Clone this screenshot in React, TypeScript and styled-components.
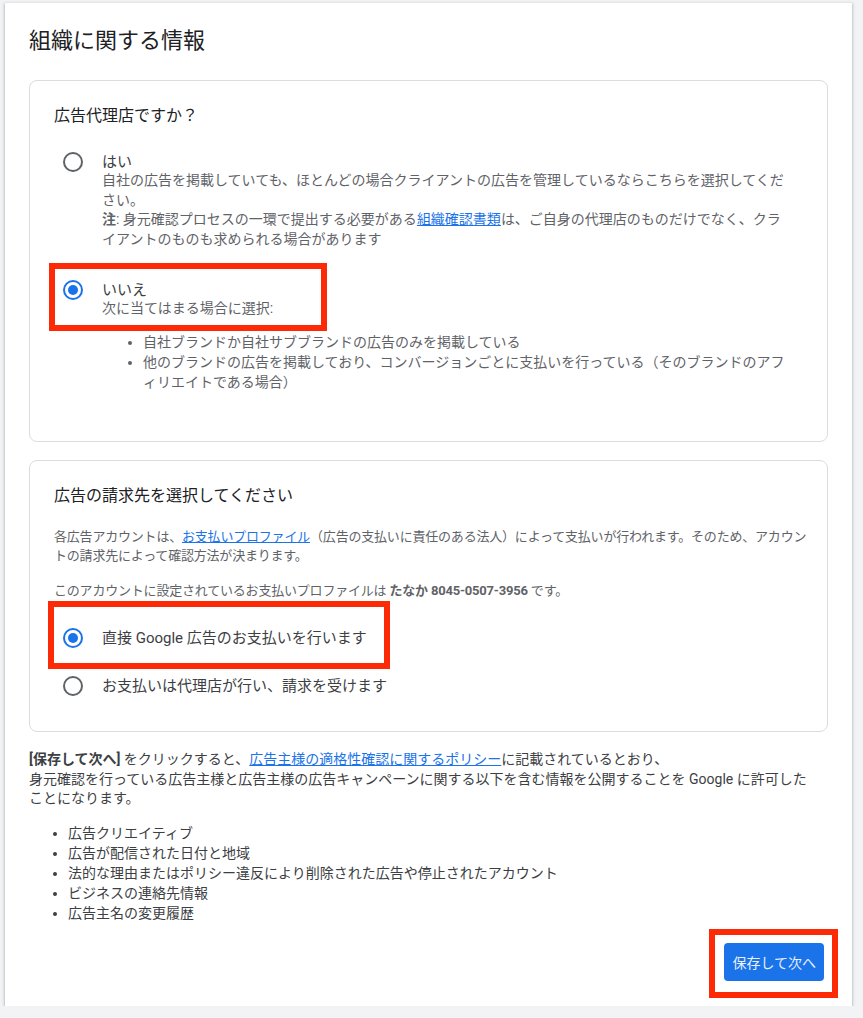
import React from "react";
import styled, { createGlobalStyle } from "styled-components";

const GlobalStyle = createGlobalStyle`
  body {
    margin: 0;
    background: #f1f3f4;
    font-family: Roboto, "Noto Sans CJK JP", "Noto Sans", sans-serif;
    color: #3c4043;
  }
`;

interface Box {
  $left: number;
  $top: number;
  $w: number;
  $h: number;
}

// red annotation frame drawn over the screenshot
const Highlight = styled.span<Box>`
  position: absolute;
  left: ${(p) => p.$left}px;
  top: ${(p) => p.$top}px;
  width: ${(p) => p.$w}px;
  height: ${(p) => p.$h}px;
  box-sizing: border-box;
  border: 6px solid #fd2a08;
  pointer-events: none;
`;

const Page = styled.div`
  width: 847px;
  margin: 3px 0 0 5px;
  box-sizing: border-box;
  padding: 24px 24px 25px;
  background: #fff;
  box-shadow: 0 1px 2px rgba(60, 64, 67, 0.3), 0 1px 3px 1px rgba(60, 64, 67, 0.15);
`;

const Title = styled.h1`
  margin: 0 0 25px;
  font-size: 22px;
  line-height: 28px;
  font-weight: 400;
  color: #202124;
`;

const Section = styled.section<{ $bottom: number }>`
  border: 1px solid #dadce0;
  border-radius: 8px;
  padding: 23px 16px ${(p) => p.$bottom}px 24px;
  & + & {
    margin-top: 18px;
  }
`;

const Heading = styled.h2`
  margin: 0;
  font-size: 16px;
  line-height: 24px;
  font-weight: 400;
  color: #202124;
`;

const Option = styled.div<{ $gap: number; $height?: number }>`
  position: relative;
  display: flex;
  align-items: ${(p) => (p.$height ? "center" : "flex-start")};
  margin-top: ${(p) => p.$gap}px;
  padding-right: 18px;
  ${(p) => (p.$height ? `height: ${p.$height}px;` : "")}
`;

const RadioSlot = styled.div<{ $lh: number }>`
  height: ${(p) => p.$lh}px;
  display: flex;
  align-items: center;
  padding-left: 9px;
  margin-right: 19px;
`;

const Radio = styled.span<{ $checked?: boolean }>`
  width: 20px;
  height: 20px;
  box-sizing: border-box;
  border-radius: 50%;
  border: 2px solid ${(p) => (p.$checked ? "#1a73e8" : "#5f6368")};
  display: flex;
  align-items: center;
  justify-content: center;
  &::after {
    content: "";
    width: 10px;
    height: 10px;
    border-radius: 50%;
    background: ${(p) => (p.$checked ? "#1a73e8" : "transparent")};
  }
`;

const OptionBody = styled.div`
  flex: 1;
`;

const Label = styled.div<{ $lh: number }>`
  font-size: 15px;
  line-height: ${(p) => p.$lh}px;
  color: #3c4043;
`;

const Desc = styled.div`
  font-size: 14px;
  line-height: 19.5px;
  color: #5f6368;
`;

const SubList = styled.ul`
  margin: 13px 0 25px;
  padding-left: 41px;
  font-size: 14px;
  line-height: 20px;
  color: #5f6368;
`;

const Para = styled.p<{ $gap: number }>`
  margin: ${(p) => p.$gap}px 0 0;
  font-size: 13px;
  line-height: 19.5px;
  letter-spacing: -0.2px;
  color: #5f6368;
`;

const Link = styled.a`
  color: #1a73e8;
  text-decoration: underline;
`;

const Strong = styled.b`
  font-weight: 700;
  color: inherit;
`;

const Notice = styled.p`
  margin: 18px 0 0;
  padding-right: 8px;
  font-size: 14px;
  line-height: 19.5px;
  color: #3c4043;
`;

const PublishList = styled.ul`
  margin: 14px 0 0;
  padding-left: 39px;
  font-size: 14px;
  line-height: 20px;
  color: #3c4043;
`;

const Actions = styled.div`
  display: flex;
  justify-content: flex-end;
  margin-top: 20px;
  padding-right: 4px;
`;

const ButtonWrap = styled.div`
  position: relative;
`;

const PrimaryButton = styled.button`
  height: 38px;
  padding: 0 8px;
  min-width: 99px;
  border: none;
  border-radius: 4px;
  background: #1a73e8;
  color: #e8f0fe;
  font-family: inherit;
  font-size: 14px;
  cursor: pointer;
`;

export default function App() {
  return (
    <>
      <GlobalStyle />
      <Page>
        <Title>組織に関する情報</Title>

        <Section $bottom={24}>
          <Heading>広告代理店ですか？</Heading>

          <Option $gap={25}>
            <RadioSlot $lh={18}>
              <Radio />
            </RadioSlot>
            <OptionBody>
              <Label $lh={18}>はい</Label>
              <Desc>
                自社の広告を掲載していても、ほとんどの場合クライアントの広告を管理しているならこちらを選択してください。
              </Desc>
              <Desc>
                <Strong>注</Strong>: 身元確認プロセスの一環で提出する必要がある
                <Link href="#">組織確認書類</Link>
                は、ご自身の代理店のものだけでなく、クライアントのものも求められる場合があります
              </Desc>
            </OptionBody>
          </Option>

          <Option $gap={32}>
            <Highlight $left={-5} $top={-18} $w={278} $h={68} />
            <RadioSlot $lh={18}>
              <Radio $checked />
            </RadioSlot>
            <OptionBody>
              <Label $lh={18}>いいえ</Label>
              <Desc>次に当てはまる場合に選択:</Desc>
              <SubList>
                <li>自社ブランドか自社サブブランドの広告のみを掲載している</li>
                <li>
                  他のブランドの広告を掲載しており、コンバージョンごとに支払いを行っている（そのブランドのアフィリエイトである場合）
                </li>
              </SubList>
            </OptionBody>
          </Option>
        </Section>

        <Section $bottom={21}>
          <Heading>広告の請求先を選択してください</Heading>
          <Para $gap={19}>
            各広告アカウントは、<Link href="#">お支払いプロファイル</Link>
            （広告の支払いに責任のある法人）によって支払いが行われます。そのため、アカウントの請求先によって確認方法が決まります。
          </Para>
          <Para $gap={15}>
            このアカウントに設定されているお支払いプロファイルは{" "}
            <Strong>たなか 8045-0507-3956</Strong> です。
          </Para>

          <Option $gap={14} $height={48}>
            <Highlight $left={-6} $top={-13} $w={342} $h={68} />
            <RadioSlot $lh={48}>
              <Radio $checked />
            </RadioSlot>
            <Label $lh={24}>直接 Google 広告のお支払いを行います</Label>
          </Option>
          <Option $gap={0} $height={48}>
            <RadioSlot $lh={48}>
              <Radio />
            </RadioSlot>
            <Label $lh={24}>お支払いは代理店が行い、請求を受けます</Label>
          </Option>
        </Section>

        <Notice>
          <Strong>[保存して次へ]</Strong> をクリックすると、
          <Link href="#">広告主様の適格性確認に関するポリシー</Link>
          に記載されているとおり、
          <br />
          身元確認を行っている広告主様と広告主様の広告キャンペーンに関する以下を含む情報を公開することを Google に許可したことになります。
        </Notice>
        <PublishList>
          <li>広告クリエイティブ</li>
          <li>広告が配信された日付と地域</li>
          <li>法的な理由またはポリシー違反により削除された広告や停止されたアカウント</li>
          <li>ビジネスの連絡先情報</li>
          <li>広告主名の変更履歴</li>
        </PublishList>

        <Actions>
          <ButtonWrap>
            <Highlight $left={-15} $top={-14} $w={129} $h={69} />
            <PrimaryButton>保存して次へ</PrimaryButton>
          </ButtonWrap>
        </Actions>
      </Page>
    </>
  );
}
